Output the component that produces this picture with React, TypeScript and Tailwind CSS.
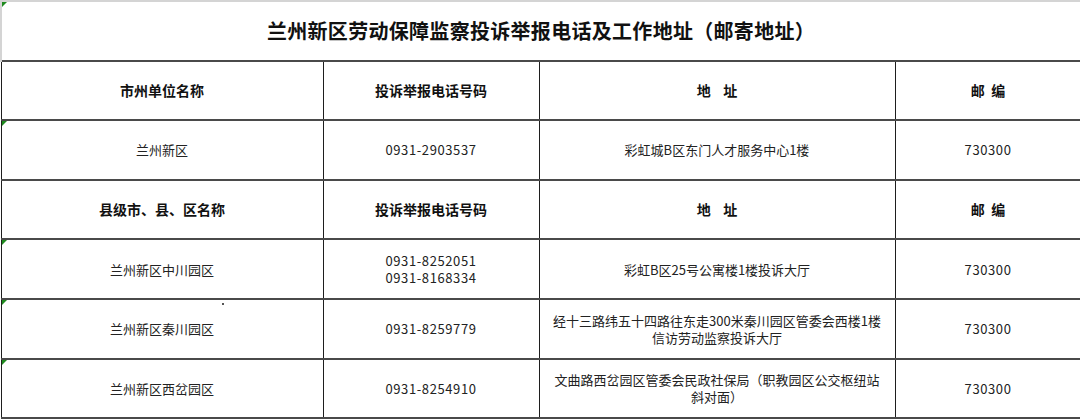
import React from 'react';

const font = { fontFamily: '"Noto Sans CJK SC", "Liberation Sans", sans-serif' };

type Row = {
  name: string;
  phones: string[];
  addr: string[];
  zip: string;
  mark?: boolean;
  dot?: boolean;
};

const rows: Row[] = [
  { name: '兰州新区中川园区', phones: ['0931-8252051', '0931-8168334'], addr: ['彩虹B区25号公寓楼1楼投诉大厅'], zip: '730300', mark: true },
  {
    name: '兰州新区秦川园区',
    phones: ['0931-8259779'],
    addr: ['经十三路纬五十四路往东走300米秦川园区管委会西楼1楼', '信访劳动监察投诉大厅'],
    zip: '730300',
    mark: true,
    dot: true,
  },
  {
    name: '兰州新区西岔园区',
    phones: ['0931-8254910'],
    addr: ['文曲路西岔园区管委会民政社保局（职教园区公交枢纽站', '斜对面）'],
    zip: '730300',
    mark: true,
  },
];

const Mark = () => (
  <span className="absolute left-0 top-0 h-0 w-0 border-t-[5px] border-r-[5px] border-t-[#1f8a1f] border-r-transparent" />
);

const cell = 'border-x border-x-[#1e1e1e] border-y-2 border-y-[#4a4a4a] text-center align-middle p-0 h-[59.6px]';

const HeaderRow = ({ first }: { first: string }) => (
  <tr className="font-bold text-[14px] text-[#111]">
    <td className={cell}>{first}</td>
    <td className={cell}>投诉举报电话号码</td>
    <td className={cell}>地&nbsp;&nbsp;&nbsp;&nbsp;址</td>
    <td className={cell}>邮&nbsp;&nbsp;编</td>
  </tr>
);

const App: React.FC = () => {
  return (
    <div className="w-[1080px] h-[420px] bg-white overflow-hidden" style={font}>
      <table className="w-[1080px] border-collapse table-fixed text-[13px] text-[#222] leading-[17px]">
        <colgroup>
          <col className="w-[322px]" />
          <col className="w-[216px]" />
          <col className="w-[356px]" />
          <col className="w-[186px]" />
        </colgroup>
        <tbody>
          <tr>
            <td
              colSpan={4}
              className="relative h-[59.6px] border-t-2 border-x-2 border-[#d4d4d4] text-center align-middle p-0 text-[20px] font-semibold text-[#111] tracking-[0.3px]"
            >
              <Mark />
              兰州新区劳动保障监察投诉举报电话及工作地址（邮寄地址）
            </td>
          </tr>
          <HeaderRow first="市州单位名称" />
          <tr>
            <td className={`${cell} relative`}>
              <Mark />
              兰州新区
            </td>
            <td className={`${cell} tracking-[0.6px]`}>0931-2903537</td>
            <td className={cell}>彩虹城B区东门人才服务中心1楼</td>
            <td className={`${cell} tracking-[0.6px]`}>730300</td>
          </tr>
          <HeaderRow first="县级市、县、区名称" />
          {rows.map((r) => (
            <tr key={r.name}>
              <td className={`${cell} relative`}>
                {r.mark && <Mark />}
                {r.dot && <span className="absolute left-[220px] top-[3px] h-[2px] w-[2px] bg-[#555]" />}
                {r.name}
              </td>
              <td className={`${cell} tracking-[0.6px]`}>
                {r.phones.map((p) => (
                  <div key={p}>{p}</div>
                ))}
              </td>
              <td className={cell}>
                {r.addr.map((a) => (
                  <div key={a}>{a}</div>
                ))}
              </td>
              <td className={`${cell} tracking-[0.6px]`}>{r.zip}</td>
            </tr>
          ))}
        </tbody>
      </table>
    </div>
  );
};

export default App;
